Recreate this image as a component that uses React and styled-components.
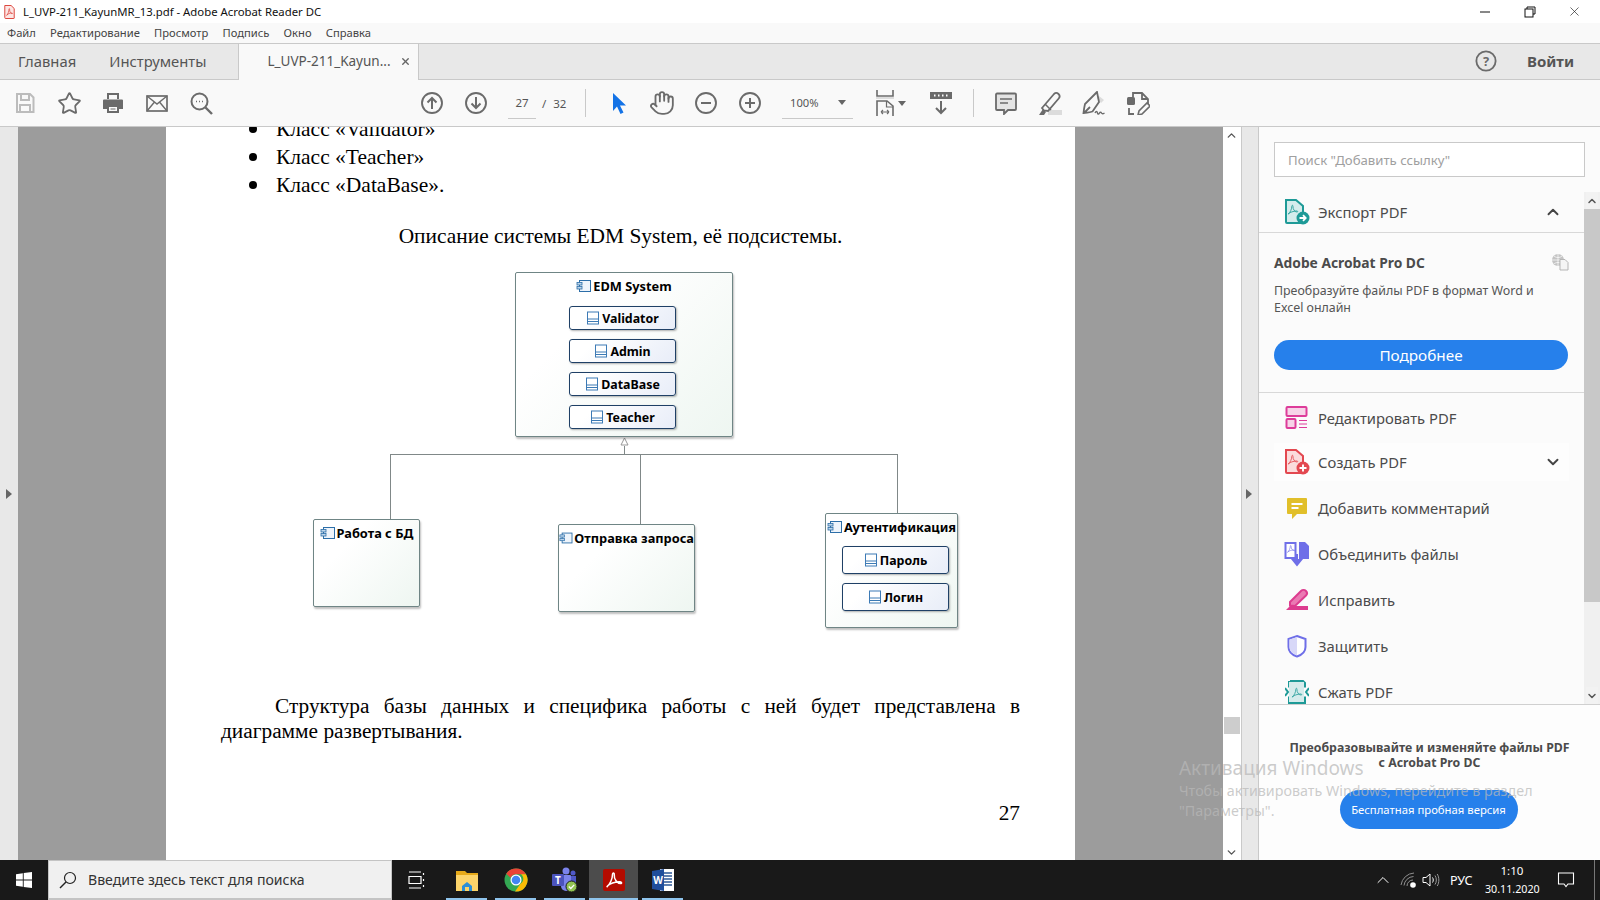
import React from "react";
import styled, { createGlobalStyle } from "styled-components";
import { ChevronUp, ChevronDown, X, Hand, Star } from "lucide-react";

const Global = createGlobalStyle`
  html, body { margin: 0; padding: 0; background: #fff; }
  body { font-family: "Noto Sans", "Open Sans", sans-serif; }
  * { box-sizing: border-box; }
`;

const Screen = styled.div`
  position: relative; width: 1600px; height: 900px; overflow: hidden;
  display: flex; flex-direction: column; color: #4b4b4b;
`;

/* window chrome */
const TitleBar = styled.div`
  height: 23px; background: #fff; display: flex; align-items: center; padding-left: 4px; flex: none;
`;
const TitleText = styled.span`
  margin-left: 8px; font-size: 11.35px; color: #111; white-space: nowrap; padding-bottom: 1px;
`;
const WinControls = styled.div`
  margin-left: auto; display: flex; align-items: center; padding-right: 3px;
`;
const WinBtn = styled.div`
  width: 45px; height: 20px; display: flex; align-items: center; justify-content: center; color: #111;
`;
const MenuBar = styled.div`
  height: 21px; flex: none; background: #f9f9f9; border-bottom: 1px solid #c9c9c9;
  display: flex; align-items: center; padding: 0 0 2px 7px; gap: 14.2px; font-size: 11.2px; color: #444;
`;
const TabBar = styled.div`
  height: 36px; flex: none; background: #e8e8e8; border-bottom: 1px solid #c9c9c9;
  display: flex; align-items: stretch;
`;
const HomeTab = styled.div`
  font-size: 14.8px; color: #555; display: flex; align-items: center; margin-left: ${p => p.$ml}px; padding-bottom: 2px;
`;
const ActiveTab = styled.div`
  width: 181px; height: 36px; margin-left: 32px; background: #f9f9f9;
  border-left: 1px solid #c9c9c9; border-right: 1px solid #c9c9c9;
  display: flex; align-items: center; padding: 0 0 2px 28px; font-size: 13.5px; color: #555; gap: 9px; white-space: nowrap;
`;
const TabRight = styled.div`
  margin-left: auto; display: flex; align-items: center; padding: 0 26px 2px 0; gap: 30px;
`;
const Login = styled.span`
  font-size: 15px; font-weight: 700; color: #555;
`;
const Toolbar = styled.div`
  height: 47px; flex: none; background: #f9f9f9; border-bottom: 1px solid #c9c9c9;
  display: flex; align-items: center; padding-left: 3px;
`;
const ToolSlot = styled.div`
  width: ${p => p.$w || 44}px; height: 40px; flex: none; display: flex; align-items: center; justify-content: center;
  margin-left: ${p => p.$ml || 0}px;
`;
const PageInput = styled.div`
  width: 28px; height: 32px; margin-left: 10px; border-bottom: 1px solid #c9c9c9; flex: none;
  display: flex; align-items: center; justify-content: center; font-size: 11.5px; color: #555;
`;
const PageTotal = styled.div`
  margin-left: 6px; width: 35px; font-size: 11.5px; color: #555; display: flex; gap: 7px; flex: none;
`;
const Sep = styled.div`
  width: 1px; height: 28px; background: #c9c9c9; flex: none; margin-left: ${p => p.$ml}px;
`;
const ZoomBox = styled.div`
  width: 71px; height: 32px; margin-left: 10px; flex: none; border-bottom: 1px solid #c9c9c9;
  display: flex; align-items: center; justify-content: space-between; padding: 0 7px 0 8px; font-size: 11.2px; color: #555;
`;
const Caret = styled.span`
  width: 0; height: 0; border-left: 4px solid transparent; border-right: 4px solid transparent; border-top: 5px solid #666;
`;

/* main */
const Main = styled.div`
  flex: 1; display: flex; min-height: 0;
`;
const LeftStrip = styled.div`
  width: 18px; flex: none; background: #e8e8e8; display: flex; align-items: center; justify-content: center;
`;
const Arrow = styled.span`
  width: 0; height: 0; border-top: 5px solid transparent; border-bottom: 5px solid transparent; border-left: 6px solid #666;
`;
const Viewer = styled.div`
  width: 1205px; flex: none; background: #9c9c9c; padding-left: 148px; overflow: hidden;
`;
const Page = styled.div`
  width: 909px; height: 733px; background: #fff; overflow: hidden; padding: 0 55px;
  font-family: "Liberation Serif", serif; font-size: 21.33px; color: #000; display: flex; flex-direction: column;
`;
const Bullets = styled.ul`
  margin: -12px 0 0; padding: 0 0 0 28px; list-style: none; line-height: 28px; flex: none; font-size: 21.5px;
`;
const Bullet = styled.li`
  display: flex; align-items: center;
  &::before { content: ""; width: 8px; height: 8px; border-radius: 50%; background: #000; margin-right: 19px; flex: none; }
`;
const Caption = styled.p`
  margin: 23px 0 0; text-align: center; line-height: 28px; flex: none; font-size: 21.4px;
`;
const Diagram = styled.div`
  position: relative; height: 400px; margin: 9px -55px 0; flex: none; font-family: "Noto Sans", sans-serif;
`;
const Wires = styled.svg`
  position: absolute; left: 0; top: 0; width: 909px; height: 400px;
`;
const Node = styled.div`
  position: absolute; left: ${p => p.$x}px; top: ${p => p.$y}px; width: ${p => p.$w}px; height: ${p => p.$h}px;
  border: 1px solid #6f8585; border-radius: 2px; background: linear-gradient(135deg, #fff 30%, #eef6f1 100%);
  box-shadow: 1px 2px 2px rgba(0,0,0,.25); padding-left: ${p => p.$pad || 0}px;
  display: flex; flex-direction: column;
`;
const NodeTitle = styled.div`
  height: 26px; flex: none; margin-left: ${p => -(p.$pad || 0)}px; margin-bottom: ${p => p.$gap || 0}px; display: flex; align-items: center; justify-content: center;
  gap: 1px; font-size: 12.8px; font-weight: 700; color: #000; white-space: nowrap;
`;
const Parts = styled.div`
  display: flex; flex-direction: column; gap: 9px;
`;
const Part = styled.div`
  width: 107px; height: ${p => p.$h}px; border: 1px solid #1f4066; border-radius: 3px;
  background: linear-gradient(135deg, #fff 20%, #e8edf8 100%); box-shadow: 1px 1px 2px rgba(0,0,0,.3);
  display: flex; align-items: center; justify-content: center; gap: 2px; font-size: 12.4px; font-weight: 700; color: #000;
`;
const Para = styled.p`
  margin: 35px 0 0; line-height: 25px; text-align: justify; text-indent: 54px; flex: none;
`;
const PageNum = styled.div`
  margin-top: 55px; text-align: right; line-height: 28px; flex: none;
`;
const DocScroll = styled.div`
  width: 18px; flex: none; background: #fff; position: relative; display: flex; flex-direction: column; align-items: center;
  justify-content: space-between; padding: 2px 1px 1px 0; color: #555;
`;
const DocThumb = styled.div`
  position: absolute; left: 1px; right: 1px; top: 590px; height: 17px; background: #cdcdcd;
`;
const SideStrip = styled.div`
  width: 18px; flex: none; background: #e8e8e8; border-left: 1px solid #c9c9c9; border-right: 1px solid #c9c9c9;
  display: flex; align-items: center; justify-content: center; padding-right: 2px;
`;
const Panel = styled.div`
  flex: 1; min-width: 0; background: #fbfbfb; display: flex; flex-direction: column;
`;
const SearchWrap = styled.div`
  height: 65px; flex: none; padding: 15px 15px 0 15px;
`;
const SearchField = styled.div`
  width: 311px; height: 35px; border: 1px solid #c9c9c9; background: #fff; display: flex; align-items: center; padding: 0 0 0 13px;
  font-size: 13.2px; color: #a0a0a0;
`;
const ToolsArea = styled.div`
  height: 513px; flex: none; display: flex; border-bottom: 1px solid #d0d0d0; overflow: hidden;
`;
const ToolsCol = styled.div`
  flex: 1; min-width: 0; overflow: hidden;
`;
const ExportHead = styled.div`
  height: 41px; border-bottom: 1px solid #d8d8d8; display: flex; align-items: center; padding: 0 15px;
`;
const RowLabel = styled.span`
  font-size: 14.8px; color: #4b4b4b; margin-left: 8px; white-space: nowrap;
`;
const IconBox = styled.span`
  width: 36px; padding-left: 10px; display: flex; justify-content: center; flex: none;
`;
const RowEnd = styled.span`
  margin-left: auto; display: flex; padding-right: 7px; color: #444;
`;
const Card = styled.div`
  height: 160px; padding: 19px 15px 0; border-bottom: 1px solid #d8d8d8;
`;
const CardHead = styled.div`
  display: flex; justify-content: space-between; align-items: center; height: 20px;
`;
const CardTitle = styled.span`
  font-size: 13.8px; font-weight: 700; color: #4b4b4b;
`;
const CardText = styled.p`
  margin: 10px 0 0; font-size: 12.4px; line-height: 17px; color: #555; width: 275px;
`;
const PrimaryButton = styled.div`
  margin-top: 24px; height: 30px; width: 294px; border-radius: 15px; background: #2680eb; color: #fff; font-size: 15.3px;
  display: flex; align-items: center; justify-content: center;
`;
const ToolList = styled.div`
  padding: 6px 15px 0; display: flex; flex-direction: column; gap: 8px;
`;
const ToolRow = styled.div`
  height: 38px; flex: none; display: flex; align-items: center;
  ${p => p.$hl ? "margin-top: -2px; background: #fdfdfd;" : ""}
`;
const Track = styled.div`
  width: 16px; flex: none; background: #f0f0f0; display: flex; flex-direction: column; align-items: center; position: relative; color: #555;
`;
const TrackBtn = styled.div`
  height: 17px; flex: none; display: flex; align-items: center; justify-content: center; background: #f2f2f2;
  margin-top: ${p => p.$end ? "auto" : 0};
`;
const TrackThumb = styled.div`
  width: 100%; height: 393px; flex: none; background: #c8c8c8;
`;
const Promo = styled.div`
  flex: 1; display: flex; flex-direction: column; align-items: center; padding: 35px 0 0 0; background: #fdfdfd;
`;
const PromoTitle = styled.div`
  width: 300px; font-size: 12.3px; font-weight: 700; line-height: 15px; text-align: center; color: #4b4b4b; white-space: nowrap;
`;
const PromoBtn = styled.div`
  margin-top: 20px; width: 178px; height: 39px; border-radius: 20px; background: #2680eb; color: #fff; font-size: 11.3px;
  display: flex; align-items: center; justify-content: center; margin-right: 2px;
`;

/* watermark */
const Watermark = styled.div`
  position: absolute; left: 1179px; top: 755px; color: rgba(184,184,184,.72); pointer-events: none; white-space: nowrap;
`;
const WmTitle = styled.div`
  font-size: 19px; line-height: 26px;
`;
const WmLine = styled.div`
  font-size: 14.3px; line-height: 19.5px;
`;

/* taskbar */
const Taskbar = styled.div`
  height: 40px; flex: none; background: #191919; display: flex; align-items: stretch; color: #fff;
`;
const StartBtn = styled.div`
  width: 48px; flex: none; display: flex; align-items: center; justify-content: center;
`;
const TaskSearch = styled.div`
  width: 344px; flex: none; background: #f0f0f0; border: 1px solid #c4c4c4; border-bottom-width: 2px; display: flex; align-items: center; padding-left: 10px; gap: 11px;
  font-size: 14.1px; color: #333;
`;
const TaskApps = styled.div`
  display: flex; align-items: stretch;
`;
const TaskApp = styled.div`
  width: ${p => p.$w || 49}px; flex: none; display: flex; align-items: center; justify-content: center; position: relative;
  background: ${p => p.$active ? "#4c4c4c" : "transparent"};
  ${p => p.$open ? `&::after { content: ""; position: absolute; bottom: 0; left: ${p.$active ? 0 : 4}px; right: ${p.$active ? 0 : 4}px; height: 2px; background: #8fc4ec; }` : ""}
`;
const Tray = styled.div`
  margin-left: auto; display: flex; align-items: center; color: #fff;
`;
const TraySlot = styled.span`
  display: flex; margin-left: ${p => p.$ml}px;
`;
const TrayLang = styled.span`
  font-size: 12.6px; margin-left: 10px; width: 35px;
`;
const Clock = styled.div`
  width: 54px; text-align: center; font-size: 10.7px; line-height: 18px; white-space: nowrap;
`;
const ClockTime = styled.div`
  font-size: 11.6px;
`;
const NotifyBox = styled.div`
  width: 54px; display: flex; justify-content: center;
`;
const ShowDesk = styled.div`
  width: 1px; height: 40px; background: #777; margin: 0 5px 0 1px;
`;

/* icons */
const G = "#6b6b6b";
const Ico = ({ children, s = 24, vb = 24, ...r }) => (
  <svg width={s} height={s} viewBox={`0 0 ${vb} ${vb}`} fill="none" {...r}>{children}</svg>
);
const Swoosh = ({ c, w = 1.4, t = "" }) => (
  <path d="M5 18.5c3-2 5.500-8 5.500-12 0-2 2-2 1.800.5-.5 4 3 8.500 6.200 8.500 2 0 1.200-2-1.500-1.700-4 .4-9 2-11 3.700-1 1-1 1.500-.5 1z" stroke={c} strokeWidth={w} fill="none" transform={t} strokeLinejoin="round" />
);
const SaveIco = () => <Ico><path d="M4 3h13l3.500 3.500V21H4z" stroke="#bcbcbc" strokeWidth="2" /><path d="M8 3v6h8V3M7 21v-7h10v7" stroke="#bcbcbc" strokeWidth="2" /></Ico>;
const PrintIco = () => <Ico><path d="M7 8V3h10v5" stroke={G} strokeWidth="2" /><path d="M3 8.500h18a1 1 0 0 1 1 1V18h-4v-4H6v4H2V9.500a1 1 0 0 1 1-1z" fill={G} /><path d="M7 15h10v6H7z" stroke={G} strokeWidth="2" /><path d="M9.500 18h5" stroke={G} /></Ico>;
const MailIco = () => <Ico><rect x="2" y="5" width="20" height="15" stroke={G} strokeWidth="1.700" /><path d="M2 5l10 8 10-8M2 20l7.500-9M22 20l-7.500-9" stroke={G} strokeWidth="1.400" /></Ico>;
const FindIco = () => <Ico><circle cx="10.500" cy="10.500" r="8" stroke={G} strokeWidth="2" /><path d="M16.500 16.500L23 23" stroke={G} strokeWidth="2.400" /><path d="M7 10.500h1M10 10.500h1M13 10.500h1" stroke={G} strokeWidth="1.600" /></Ico>;
const CircleIco = ({ children }) => <Ico><circle cx="12" cy="12" r="10" stroke={G} strokeWidth="1.900" />{children}</Ico>;
const UpIco = () => <CircleIco><path d="M12 18V7M7.500 11.500L12 7l4.500 4.500" stroke={G} strokeWidth="2" /></CircleIco>;
const DownIco = () => <CircleIco><path d="M12 6v11M7.500 12.500L12 17l4.500-4.500" stroke={G} strokeWidth="2" /></CircleIco>;
const MinusIco = () => <CircleIco><path d="M7 12h10" stroke={G} strokeWidth="2" /></CircleIco>;
const PlusIco = () => <CircleIco><path d="M7 12h10M12 7v10" stroke={G} strokeWidth="2" /></CircleIco>;
const CursorIco = () => <Ico><path d="M6 2l13 12.500h-6l3.500 7-3 1.500-3.500-7.500L6 20z" fill="#1473e6" /></Ico>;
const FitIco = () => <svg width="18" height="26" viewBox="0 0 18 26" fill="none"><path d="M1 0v6h16V0" stroke={G} strokeWidth="1.600" /><path d="M0 8h18" stroke="#ddd" strokeWidth="2" /><path d="M1 26V11h10l6 5v10" stroke={G} strokeWidth="1.600" /><path d="M10.500 11v6H17" stroke={G} strokeWidth="1.200" /><path d="M5 22h8M5 22l2-2M5 22l2 2M13 22l-2-2M13 22l-2 2" stroke={G} strokeWidth="1.100" /></svg>;
const ScrollIco = () => <Ico s={26} vb={26}><rect x="2" y="2" width="22" height="7" fill={G} /><path d="M6 5.500h1.500M10 5.500h1.500M14 5.500h1.500M18 5.500h1.500" stroke="#fff" strokeWidth="2" /><path d="M13 11v12M8 18l5 5 5-5" stroke={G} strokeWidth="2" /></Ico>;
const CommentIco = () => <Ico><path d="M3 2.500h18a1 1 0 0 1 1 1V18a1 1 0 0 1-1 1h-7l-4 4v-4H3a1 1 0 0 1-1-1V3.500a1 1 0 0 1 1-1z" fill="#e4e4e4" stroke={G} strokeWidth="1.800" /><path d="M6 8h12M6 12h8" stroke={G} strokeWidth="1.500" /></Ico>;
const HighlightIco = () => <Ico><rect x="10" y="19" width="14" height="5" fill="#dcdcdc" /><path d="M4 17L16 3c1.500-1.500 3-1.500 4.500 0s1.500 3 .2 4.500L10 20l-4-.5z" stroke={G} strokeWidth="1.800" /><path d="M7 13l6 6" stroke={G} strokeWidth="1.500" /><path d="M1 24l4-6 3 3-2 3z" fill={G} /></Ico>;
const SignIco = () => <Ico><path d="M17 5l5 4-3 3-4-5z" fill="#dcdcdc" /><path d="M15 1L3 13c-.5 2-1 5-1.500 9 3 0 7-1 9-1.500L17 11zM2 22l6-6" stroke={G} strokeWidth="1.800" /><path d="M13 22c1-2 2-2 2.500 0s1.500 1 2 0 1.500-1 2 0 1.500 1 3 0" stroke={G} strokeWidth="1.400" /></Ico>;
const EditDocIco = () => <Ico><rect x="1" y="6" width="8" height="8" rx="1.500" fill={G} /><path d="M7 6V2h9l6 6v6M16 2v6h6M3 17v6h5" stroke={G} strokeWidth="1.800" /><path d="M12 24l1-4 8-8 3 3-8 8z" stroke={G} strokeWidth="1.600" fill="#fafafa" /></Ico>;
const HelpIco = () => <Ico s={22}><circle cx="12" cy="12" r="10.500" stroke={G} strokeWidth="2" /><text x="12" y="17" textAnchor="middle" fontSize="14" fontWeight="700" fill={G} fontFamily="Noto Sans">?</text></Ico>;
const RestoreIco = () => <Ico s={12} vb={12}><path d="M3 3V1h8v7H9" stroke="#111" /><rect x="1" y="3" width="8" height="8" stroke="#111" /></Ico>;

const PdfTitleIco = () => <svg width="11" height="14" viewBox="0 0 14 14" preserveAspectRatio="none" fill="none"><path d="M1 .5h8l4 3V13a.5.5 0 0 1-.5.5H2a1 1 0 0 1-1-1z" fill="#fde6e4" stroke="#d9342b" /><Swoosh c="#d9342b" w={1.400} t="translate(1 1) scale(.5)" /></svg>;

const ExportIco = () => <Ico s={26} vb={26}><path d="M2 1h10l7 6v17H3a1 1 0 0 1-1-1z" fill="#d5ecec" stroke="#1e9a97" strokeWidth="2" /><Swoosh c="#1e9a97" w={1.300} t="translate(1 3) scale(.65)" /><circle cx="19" cy="19" r="6.500" fill="#1e9a97" /><path d="M15.500 19h6M19 16.200l2.700 2.800-2.700 2.800" stroke="#fff" strokeWidth="1.800" /></Ico>;
const EditPdfIco = () => <Ico s={24} vb={24}><rect x="1.500" y="1" width="20" height="9" rx="1" fill="#f7d4e8" stroke="#dd3c9a" strokeWidth="2" /><rect x="1.500" y="13" width="9" height="9" rx="1" fill="#f7d4e8" stroke="#dd3c9a" strokeWidth="2" /><path d="M14 14.500h8M14 18h8M14 21.500h8" stroke="#dd3c9a" /></Ico>;
const CreateIco = () => <Ico s={26} vb={26}><path d="M2 1h10l7 6v17H3a1 1 0 0 1-1-1z" fill="#fbdcdc" stroke="#e34850" strokeWidth="2" /><Swoosh c="#e34850" w={1.300} t="translate(1 3) scale(.65)" /><circle cx="19" cy="19" r="6.500" fill="#e34850" /><path d="M15.500 19h7M19 15.500v7" stroke="#fff" strokeWidth="1.900" /></Ico>;
const AddCommentIco = () => <Ico s={24} vb={24}><path d="M3 2h18a1 1 0 0 1 1 1v14a1 1 0 0 1-1 1H12l-5 5v-5H3a1 1 0 0 1-1-1V3a1 1 0 0 1 1-1z" fill="#e1bf2a" /><path d="M6.500 8h11M6.500 12h7" stroke="#fff" strokeWidth="2" /></Ico>;
const MergeIco = () => <Ico s={26} vb={26}><path d="M1.500 2h10v15h-10z" fill="#fff" stroke="#6f6fe8" strokeWidth="2" /><Swoosh c="#6f6fe8" w={1.200} t="translate(1 2) scale(.5)" /><path d="M15 1h6l4 4v13H15z" fill="#6f6fe8" /><path d="M13 13v8M9 19h8l-4 5z" stroke="#6f6fe8" strokeWidth="2" fill="#6f6fe8" /></Ico>;
const FixIco = () => <Ico s={24} vb={24}><path d="M5 14L16 3c1.500-1.500 3.500-1.500 5 0s1.500 3 0 4.500L10 18l-5-.5z" fill="#ea7ab3" stroke="#dd3c8f" strokeWidth="2" /><path d="M1 22l4-4h18v4z" fill="#dd3c8f" /></Ico>;
const ShieldIco = () => <Ico s={24} vb={24}><path d="M12 2l8.500 3v8c0 5-4 8-8.500 9.500C7.500 21 3.500 18 3.500 13V5z" fill="#fff" stroke="#6f6fe8" strokeWidth="2" /><path d="M12 3v18.500C7.500 20 4.500 17 4.500 13V5.500z" fill="#d8d8f8" /></Ico>;
const CompressIco = () => <Ico s={24} vb={24}><path d="M5 1h13l2 2v4.500M20 16.500V23H4v-6.500M4 7.500V1" stroke="#1e9a97" strokeWidth="2" /><path d="M4 2h15v20H4z" fill="#d5ecec" /><Swoosh c="#1e9a97" w={1.200} t="translate(4 5) scale(.65)" /><path d="M0 8l3 4-3 4M24 8l-3 4 3 4" stroke="#1e9a97" strokeWidth="2" /></Ico>;
const SharedIco = () => <Ico s={18} vb={18}><circle cx="7" cy="7" r="6" fill="#c4c4c4" /><path d="M1 7h12M7 1v12M3 3c2 2 6 2 8 0M3 11c2-2 6-2 8 0" stroke="#fff" strokeWidth=".7" /><path d="M9 6.500h5l3 3V17H9z" fill="#f5f5f5" stroke="#b5b5b5" /></Ico>;

const CompIco = () => <Ico s={16} vb={16}><rect x="3.500" y="2.500" width="11" height="11" fill="#eef4fb" stroke="#2c6ea8" /><rect x="1" y="4.500" width="5" height="2.500" fill="#bcd4ea" stroke="#2c6ea8" strokeWidth=".8" /><rect x="1" y="8.500" width="5" height="2.500" fill="#bcd4ea" stroke="#2c6ea8" strokeWidth=".8" /></Ico>;
const ClassIco = () => <Ico s={14} vb={14}><rect x="1.500" y="1" width="11" height="12" fill="#fff" stroke="#3c7ab5" /><path d="M1.500 8h11M1.500 10.500h11" stroke="#3c7ab5" /></Ico>;

const WinLogo = () => <Ico s={16} vb={16}><path d="M0 2.200L6.800 1.200V7.600H0zM7.700 1.100L16 0V7.600H7.700zM0 8.400H6.800V14.800L0 13.800zM7.700 8.400H16V16L7.700 14.900z" fill="#fff" /></Ico>;
const SearchGlass = () => <Ico s={18} vb={18}><circle cx="11" cy="7" r="5.500" stroke="#222" strokeWidth="1.200" /><path d="M7 11l-6 6" stroke="#222" strokeWidth="1.400" /></Ico>;
const TaskViewIco = () => <Ico s={18} vb={18}><path d="M1 1h12M1 17h12M1 5.500h12v7H1zM15.500 2v2M15.500 8v2M15.500 14v2" stroke="#fff" strokeWidth="1.200" /></Ico>;
const FolderIco = () => <Ico s={24} vb={24}><path d="M1 3h9l2 2h11v4H1z" fill="#e6a919" /><path d="M1 7h22v16H1z" fill="#fcd46a" /><path d="M7 18l5-4 5 4v5H7z" fill="#2b8fd8" /><path d="M10 19h4v4h-4z" fill="#fcd46a" /></Ico>;
const ChromeIco = () => <Ico s={24} vb={24}><circle cx="12" cy="12" r="11.500" fill="#34a853" /><path d="M12 .5a11.500 11.500 0 0 1 10 5.750H12a5.750 5.750 0 0 0-5.400 3.600L2.300 5.800A11.500 11.500 0 0 1 12 .5z" fill="#ea4335" /><path d="M22 6.250A11.500 11.500 0 0 1 11 23.450l5.200-7.500A5.750 5.750 0 0 0 17 6.250z" fill="#fbbc05" /><circle cx="12" cy="12" r="5.500" fill="#fff" /><circle cx="12" cy="12" r="4.300" fill="#4285f4" /></Ico>;
const TeamsIco = () => <Ico s={26} vb={26}><circle cx="14" cy="4" r="3.500" fill="#7b83eb" /><circle cx="21" cy="6" r="2.500" fill="#5059c9" /><path d="M9 8h9a1 1 0 0 1 1 1v10a5 5 0 0 1-10 0z" fill="#7b83eb" /><path d="M19 9h5v7a3 3 0 0 1-5 2z" fill="#5059c9" /><rect x="0" y="7" width="12" height="12" rx="1" fill="#4b53bc" /><text x="6" y="16.500" textAnchor="middle" fontSize="10" fontWeight="700" fill="#fff" fontFamily="Noto Sans">T</text><circle cx="19.500" cy="19.500" r="5.500" fill="#92c353" stroke="#191919" /><path d="M16.800 19.500l2 2 3.400-3.600" stroke="#fff" strokeWidth="1.300" /></Ico>;
const AcrobatIco = () => <Ico s={24} vb={24}><rect x="1" y="1" width="22" height="22" rx="2" fill="#b30b00" /><Swoosh c="#fff" w={1.500} t="translate(0 0)" /></Ico>;
const WordIco = () => <Ico s={24} vb={24}><path d="M9 1h14v22H9z" fill="#fff" /><path d="M12 5h9M12 8h9M12 11h9M12 14h9M12 17h9" stroke="#2b5797" strokeWidth="1.300" /><path d="M1 3l12-2v22L1 21z" fill="#1f4e9c" /><text x="7" y="16" textAnchor="middle" fontSize="10" fontWeight="700" fill="#fff" fontFamily="Noto Sans">W</text></Ico>;
const WifiIco = () => <Ico s={18} vb={18}><path d="M1 14a14 14 0 0 1 13-12M4 14.500a10 10 0 0 1 9.500-9M7 15a6 6 0 0 1 6-6" stroke="#8f8f8f" strokeWidth="1" /><circle cx="13" cy="14" r="2.800" fill="#fff" /></Ico>;
const SpeakerIco = () => <Ico s={18} vb={18}><path d="M1 6.500h3L8 3v12l-4-3.500H1z" stroke="#fff" /><path d="M10.500 6.500c1 1.500 1 3.500 0 5" stroke="#fff" /><path d="M13 4.500c1.800 2.500 1.800 6.500 0 9M15.200 3c2.200 3.500 2.200 8.500 0 12" stroke="#999" /></Ico>;
const NotifyIco = () => <Ico s={18} vb={18}><path d="M1.500 2h15v11H11l-2 2.500L7 13H1.500z" stroke="#fff" strokeWidth="1.100" /></Ico>;

const parts1 = [["Validator", 24], ["Admin", 24], ["DataBase", 24], ["Teacher", 24]];
const parts2 = [["Пароль", 28], ["Логин", 28]];
const nodes = [
  { title: "EDM System", x: 349, y: 13, w: 218, h: 165, pad: 53, gap: 7, parts: parts1 },
  { title: "Работа с БД", x: 147, y: 260, w: 107, h: 88 },
  { title: "Отправка запроса", x: 392, y: 265, w: 137, h: 88 },
  { title: "Аутентификация", x: 659, y: 254, w: 133, h: 115, pad: 16, gap: 6, parts: parts2 },
];
const tools = [
  [<EditPdfIco />, "Редактировать PDF"],
  [<CreateIco />, "Создать PDF", true],
  [<AddCommentIco />, "Добавить комментарий"],
  [<MergeIco />, "Объединить файлы"],
  [<FixIco />, "Исправить"],
  [<ShieldIco />, "Защитить"],
  [<CompressIco />, "Сжать PDF"],
];
const menu = ["Файл", "Редактирование", "Просмотр", "Подпись", "Окно", "Справка"];

export default function App() {
  return (
    <Screen>
      <Global />
      <TitleBar>
        <PdfTitleIco />
        <TitleText>L_UVP-211_KayunMR_13.pdf - Adobe Acrobat Reader DC</TitleText>
        <WinControls>
          <WinBtn><Ico s={12} vb={12}><path d="M1 6h10" stroke="#111" /></Ico></WinBtn>
          <WinBtn><RestoreIco /></WinBtn>
          <WinBtn><X size={15} strokeWidth={1} /></WinBtn>
        </WinControls>
      </TitleBar>
      <MenuBar>{menu.map(m => <span key={m}>{m}</span>)}</MenuBar>
      <TabBar>
        <HomeTab $ml={18}>Главная</HomeTab>
        <HomeTab $ml={33}>Инструменты</HomeTab>
        <ActiveTab>L_UVP-211_Kayun...<X size={11} strokeWidth={3} color="#666" /></ActiveTab>
        <TabRight><HelpIco /><Login>Войти</Login></TabRight>
      </TabBar>
      <Toolbar>
        <ToolSlot><SaveIco /></ToolSlot>
        <ToolSlot><Star size={25} strokeWidth={1.700} color={G} /></ToolSlot>
        <ToolSlot><PrintIco /></ToolSlot>
        <ToolSlot><MailIco /></ToolSlot>
        <ToolSlot><FindIco /></ToolSlot>
        <ToolSlot $ml={187}><UpIco /></ToolSlot>
        <ToolSlot><DownIco /></ToolSlot>
        <PageInput>27</PageInput>
        <PageTotal><span>/</span><span>32</span></PageTotal>
        <Sep $ml={8} />
        <ToolSlot $ml={11} $w={43}><CursorIco /></ToolSlot>
        <ToolSlot><Hand size={26} strokeWidth={1.700} color={G} /></ToolSlot>
        <ToolSlot><MinusIco /></ToolSlot>
        <ToolSlot><PlusIco /></ToolSlot>
        <ZoomBox>100%<Caret /></ZoomBox>
        <ToolSlot $ml={19} $w={26}><FitIco /></ToolSlot>
        <Caret />
        <ToolSlot $ml={13} $w={44}><ScrollIco /></ToolSlot>
        <Sep $ml={10} />
        <ToolSlot $ml={10}><CommentIco /></ToolSlot>
        <ToolSlot><HighlightIco /></ToolSlot>
        <ToolSlot><SignIco /></ToolSlot>
        <ToolSlot><EditDocIco /></ToolSlot>
      </Toolbar>
      <Main>
        <LeftStrip><Arrow /></LeftStrip>
        <Viewer>
          <Page>
            <Bullets>
              <Bullet>Класс «Validator»</Bullet>
              <Bullet>Класс «Teacher»</Bullet>
              <Bullet>Класс «DataBase».</Bullet>
            </Bullets>
            <Caption>Описание системы EDM System, её подсистемы.</Caption>
            <Diagram>
              <Wires viewBox="0 0 909 400">
                <path d="M224.500 195.500H731.500M224.500 195V260M474.500 195V265M731.500 195V254M458.500 195V187" stroke="#808888" fill="none" />
                <path d="M458.500 179l-3.500 7h7z" fill="#fff" stroke="#999" />
              </Wires>
              {nodes.map(n => (
                <Node key={n.title} $x={n.x} $y={n.y} $w={n.w} $h={n.h} $pad={n.pad}>
                  <NodeTitle $pad={n.pad} $gap={n.gap}><CompIco />{n.title}</NodeTitle>
                  {n.parts && (
                    <Parts>
                      {n.parts.map(([t, h]) => <Part key={t} $h={h}><ClassIco />{t}</Part>)}
                    </Parts>
                  )}
                </Node>
              ))}
            </Diagram>
            <Para>Структура базы данных и специфика работы с ней будет представлена в диаграмме развертывания.</Para>
            <PageNum>27</PageNum>
          </Page>
        </Viewer>
        <DocScroll>
          <ChevronUp size={13} strokeWidth={2.500} />
          <DocThumb />
          <ChevronDown size={13} strokeWidth={2.500} />
        </DocScroll>
        <SideStrip><Arrow /></SideStrip>
        <Panel>
          <SearchWrap><SearchField>Поиск "Добавить ссылку"</SearchField></SearchWrap>
          <ToolsArea>
            <ToolsCol>
              <ExportHead>
                <IconBox><ExportIco /></IconBox>
                <RowLabel>Экспорт PDF</RowLabel>
                <RowEnd><ChevronUp size={18} strokeWidth={2.500} /></RowEnd>
              </ExportHead>
              <Card>
                <CardHead>
                  <CardTitle>Adobe Acrobat Pro DC</CardTitle>
                  <SharedIco />
                </CardHead>
                <CardText>Преобразуйте файлы PDF в формат Word и Excel онлайн</CardText>
                <PrimaryButton>Подробнее</PrimaryButton>
              </Card>
              <ToolList>
                {tools.map(([icon, label, more]) => (
                  <ToolRow key={label} $hl={more}>
                    <IconBox>{icon}</IconBox>
                    <RowLabel>{label}</RowLabel>
                    {more && <RowEnd><ChevronDown size={18} strokeWidth={2.500} /></RowEnd>}
                  </ToolRow>
                ))}
              </ToolList>
            </ToolsCol>
            <Track>
              <TrackBtn><ChevronUp size={12} strokeWidth={3} /></TrackBtn>
              <TrackThumb />
              <TrackBtn $end><ChevronDown size={12} strokeWidth={3} /></TrackBtn>
            </Track>
          </ToolsArea>
          <Promo>
            <PromoTitle>Преобразовывайте и изменяйте файлы PDF<br />с Acrobat Pro DC</PromoTitle>
            <PromoBtn>Бесплатная пробная версия</PromoBtn>
          </Promo>
        </Panel>
      </Main>
      <Taskbar>
        <StartBtn><WinLogo /></StartBtn>
        <TaskSearch><SearchGlass />Введите здесь текст для поиска</TaskSearch>
        <TaskApps>
          <TaskApp $w={50}><TaskViewIco /></TaskApp>
          <TaskApp $open><FolderIco /></TaskApp>
          <TaskApp $open><ChromeIco /></TaskApp>
          <TaskApp $open><TeamsIco /></TaskApp>
          <TaskApp $open $active><AcrobatIco /></TaskApp>
          <TaskApp $open><WordIco /></TaskApp>
        </TaskApps>
        <Tray>
          <ChevronUp size={20} strokeWidth={1.200} />
          <TraySlot $ml={7}><WifiIco /></TraySlot>
          <TraySlot $ml={4}><SpeakerIco /></TraySlot>
          <TrayLang>РУС</TrayLang>
          <Clock><ClockTime>1:10</ClockTime>30.11.2020</Clock>
          <NotifyBox><NotifyIco /></NotifyBox>
          <ShowDesk />
        </Tray>
      </Taskbar>
      <Watermark>
        <WmTitle>Активация Windows</WmTitle>
        <WmLine>Чтобы активировать Windows, перейдите в раздел</WmLine>
        <WmLine>"Параметры".</WmLine>
      </Watermark>
    </Screen>
  );
}
